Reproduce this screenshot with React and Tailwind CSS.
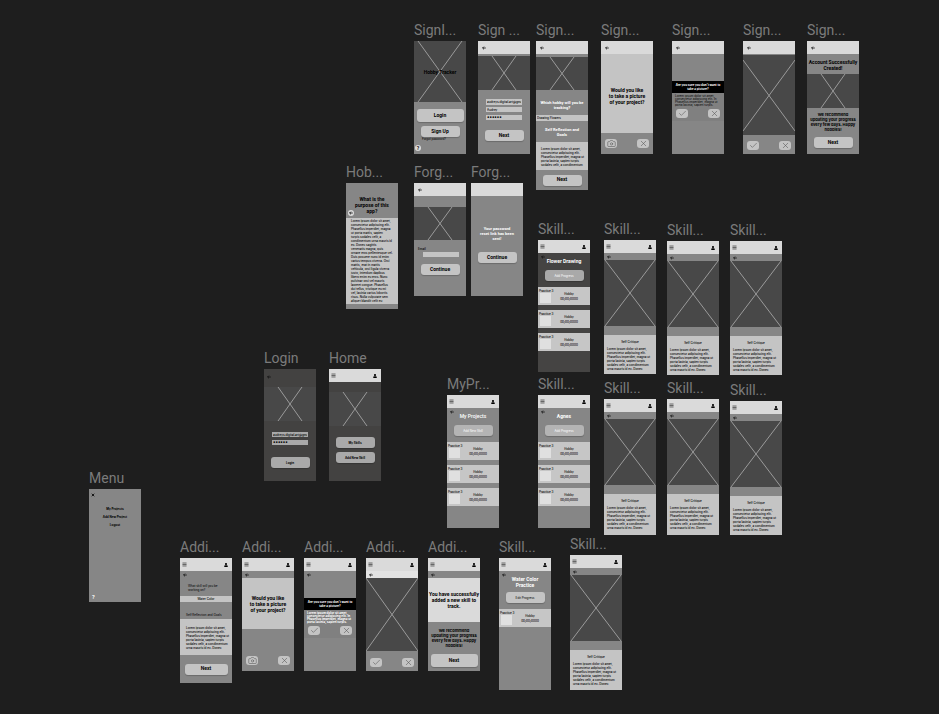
import React from "react";
import { Camera, Check, Menu, X } from "lucide-react";
import { FaUser } from "react-icons/fa";

const LOREM = [
  "Lorem ipsum dolor sit amet,",
  "consectetur adipiscing elit.",
  "Phasellus imperdiet, magna ut",
  "porta lacinia, sapien turpis",
  "sodales velit, a condimentum",
  "urna mauris id ex. Donec",
];

const PURPOSE = [
  "Lorem ipsum dolor sit amet,",
  "consectetur adipiscing elit.",
  "Phasellus imperdiet, magna",
  "ut porta mattis, sapien",
  "turpis sodales velit, a",
  "condimentum urna mauris id",
  "ex. Donec sagittis",
  "venenatis magna, quis",
  "ornare eros pellentesque vel.",
  "Duis posuere nunc id enim",
  "varius tempus viverra. Orci",
  "mattis, erat in mattis",
  "vehicula, orci ligula viverra",
  "justo, interdum dapibus",
  "libero enim eu eros. Nunc",
  "pulvinar orci vel mauris",
  "laoreet congue. Phasellus",
  "dui tellus, tristique eu mi",
  "vel, lacinia varius lobortis",
  "risus. Nulla vulputate sem",
  "aliquet blandit velit eu",
];

const SUCCESS = ["We recommend", "updating your progress", "every few days. Happy", "hobbies!"];

const TINY = "font-[Inter,sans-serif] text-[3px] leading-[4px]";
const NOTE = "font-[Inter,sans-serif] text-[4px] font-bold leading-[5px] text-black";
const HEAD = "text-[5px] font-bold leading-[6px] text-black";

function Lines({ items }) {
  return items.map((t, i) => (
    <span key={i} className="block whitespace-nowrap">
      {t}
    </span>
  ));
}

function Screen({ title, pos, tone = "bg-[#868686]", children }) {
  return (
    <section className={`absolute w-[52px] ${pos}`}>
      <h2 className="h-[21px] whitespace-nowrap text-[14px] leading-[21px] text-[#7b7b7b]">{title}</h2>
      <div className={`flex flex-col overflow-hidden ${tone}`}>{children}</div>
    </section>
  );
}

function Seg({ className = "", children }) {
  return (
    <div className={`flex shrink-0 flex-col items-center justify-center text-center ${className}`}>
      {children}
    </div>
  );
}

function Back() {
  return (
    <a href="#back" aria-label="Back" className="block">
      <svg viewBox="0 0 10 10" className="block size-[4px]" fill="none" stroke="#111" strokeWidth="2">
        <path d="M9.5 5H1.5M5 1.5L1.5 5L5 8.5" />
      </svg>
    </a>
  );
}

function BackBar({ empty }) {
  return (
    <header className="flex h-[13px] shrink-0 items-center bg-[#dadada] px-1">
      {!empty && <Back />}
    </header>
  );
}

function NavBar() {
  return (
    <header className="flex h-[13px] shrink-0 items-center justify-between bg-[#dadada] pl-[2px] pr-1">
      <a href="#menu" aria-label="Menu">
        <Menu size={5} strokeWidth={3} color="#222" />
      </a>
      <a href="#account" aria-label="Account">
        <FaUser size={4} color="#000" />
      </a>
    </header>
  );
}

function BackRow({ className = "h-[7px]" }) {
  return (
    <div className={`flex shrink-0 items-center px-[3px] ${className}`}>
      <Back />
    </div>
  );
}

function Picture({ className, x1 = 14, x2 = 38, y1 = 0, y2 = 100, box = 100, children }) {
  return (
    <div className={`relative w-full shrink-0 bg-[#484848] ${className}`}>
      <svg viewBox={`0 0 52 ${box}`} preserveAspectRatio="none" className="block h-full w-full">
        <path
          d={`M${x1} ${y1}L${x2} ${y2}M${x2} ${y1}L${x1} ${y2}`}
          stroke="#a4a4a4"
          strokeWidth="0.9"
          vectorEffect="non-scaling-stroke"
        />
      </svg>
      {children}
    </div>
  );
}

function Btn({
  children,
  size = "h-[11px] w-[39px]",
  text = "text-[5px] font-bold text-black",
  tone = "bg-[#c4c4c4]",
}) {
  return (
    <button
      type="button"
      className={`flex shrink-0 items-center justify-center whitespace-nowrap rounded-[3px] shadow-[0_1px_1px_rgba(0,0,0,0.2)] ${size} ${text} ${tone}`}
    >
      {children}
    </button>
  );
}

function IconBtn({ icon: Icon, label }) {
  return (
    <button
      type="button"
      aria-label={label}
      className="flex h-[9px] w-[12px] items-center justify-center rounded-[3px] bg-[#c4c4c4] text-[#555]"
    >
      <Icon size={9} strokeWidth={1.5} />
    </button>
  );
}

function Choice({ icon = Check, label = "Yes", className = "" }) {
  return (
    <div className={`flex shrink-0 justify-between px-1 ${className}`}>
      <IconBtn icon={icon} label={label} />
      <IconBtn icon={X} label="No" />
    </div>
  );
}

function Field({
  label,
  value,
  type = "text",
  size = "h-[5px] w-[36px]",
  text = "font-[Inter,sans-serif] text-[3px]",
  tone = "bg-[#c4c4c4]",
  className = "",
}) {
  return (
    <input
      aria-label={label}
      type={type}
      defaultValue={value}
      className={`block shrink-0 px-px font-medium leading-none text-black ${size} ${text} ${tone} ${className}`}
    />
  );
}

function Entry({ n }) {
  return (
    <article className={`flex h-[18px] shrink-0 bg-[#c6c6c6] font-medium text-black ${TINY}`}>
      <div className="w-[20px] pl-px pt-[2px]">
        <p className="whitespace-nowrap">Practice {n}</p>
        <div className="ml-px h-[10px] w-[11px] bg-[#e0e0e0]" />
      </div>
      <div className="flex w-[22px] flex-col items-center justify-center gap-px">
        <p>Hobby</p>
        <p>00/00/0000</p>
      </div>
    </article>
  );
}

function ProjectList({
  title,
  pos,
  tone,
  weight = "font-bold",
  head = "h-[12px]",
  action,
  btnTone,
  btnText = "text-white",
  entries,
  end,
  lines,
}) {
  return (
    <Screen title={title} pos={pos} tone={tone}>
      <NavBar />
      <BackRow className="h-[5px] pt-[2px]" />
      <Seg className={`justify-start text-[5px] leading-[6px] text-white ${weight} ${head}`}>
        <h3>
          <Lines items={lines} />
        </h3>
      </Seg>
      <Seg className="mb-[6px]">
        <Btn text={`${TINY} ${btnText}`} tone={btnTone}>
          {action}
        </Btn>
      </Seg>
      <div className={`flex flex-col gap-[5px] ${end}`}>
        {entries.map((n, i) => (
          <Entry key={i} n={n} />
        ))}
      </div>
    </Screen>
  );
}

function Critique({ pos, tail = "h-[39px]" }) {
  return (
    <Screen title="Skill..." pos={pos}>
      <NavBar />
      <BackRow />
      <Picture className="h-[66px]" x1={1} x2={51} />
      <div className="h-[9px] shrink-0" />
      <div className={`shrink-0 bg-[#c4c4c4] px-[3px] pt-[5px] font-medium text-black ${TINY} ${tail}`}>
        <h3 className="mb-[3px] text-center">Self Critique</h3>
        <p>
          <Lines items={LOREM} />
        </p>
      </div>
    </Screen>
  );
}

function Question() {
  return (
    <h3 className={HEAD}>
      <Lines items={["Would you like", "to take a picture", "of your project?"]} />
    </h3>
  );
}

function Confirm({ text }) {
  return (
    <>
      <Seg className={`h-[12px] bg-black font-bold text-white ${TINY}`}>
        <h3>
          <Lines items={["Are you sure you don't want to", "take a picture?"]} />
        </h3>
      </Seg>
      <div className="h-[28px] bg-[#808080]">
        <p className={`h-[16px] px-[3px] pt-[2px] font-[Inter,sans-serif] text-[3px] leading-[3px] ${text}`}>
          <Lines
            items={[
              "Lorem ipsum dolor sit amet,",
              "consectetur adipiscing elit. In",
              "Phasellus imperdiet, magna ut",
              "porta lacinia, sapien turpis.",
            ]}
          />
        </p>
        <Choice />
      </div>
    </>
  );
}

export default function App() {
  return (
    <main className="relative min-h-screen w-full overflow-hidden bg-[#1e1e1e] font-[Roboto,sans-serif]">
      <Screen title="SignI..." pos="left-[414px] top-[20px]">
        <Picture className="h-[61px]" x1={4} x2={48}>
          <h3 className={`absolute inset-0 flex items-center justify-center whitespace-nowrap ${HEAD}`}>
            Hobby Tracker
          </h3>
        </Picture>
        <Seg className="h-[52px] justify-start pt-[7px]">
          <Btn size="h-[13px] w-[47px]">Login</Btn>
          <div className="h-[4px]" />
          <Btn>Sign Up</Btn>
          <a href="#forgot" className="self-start pl-2 text-[3px] leading-[5px] text-black">
            Forgot password?
          </a>
          <a
            href="#help"
            className="mt-[3px] ml-px flex size-[6px] items-center justify-center self-start rounded-full bg-[#dadada] text-[5px] font-bold leading-none text-black"
          >
            ?
          </a>
        </Seg>
      </Screen>

      <Screen title="Sign ..." pos="left-[478px] top-[20px]">
        <BackBar />
        <Picture className="mt-[2px] h-[34px]" />
        <Seg className="h-[64px] justify-start pt-[9px]">
          <Field label="Email" value="audreys.digital.art@gmail" size="h-[6px] w-[36px]" className="mb-[2px]" />
          <Field label="Name" value="Audrey" className="mb-[3px]" />
          <Field label="Password" value="••••••" text="text-[7px]" className="mb-[10px]" />
          <Btn>Next</Btn>
        </Seg>
      </Screen>

      <Screen title="Sign..." pos="left-[536px] top-[20px]">
        <BackBar />
        <Picture className="mt-[3px] h-[33px]" />
        <Seg className="h-[25px] pt-[5px] text-[4px] font-bold leading-[5px] text-white">
          <h3>
            <Lines items={["Which hobby will you be", "tracking?"]} />
          </h3>
        </Seg>
        <Field label="Hobby" value="Drawing Flowers" size="h-[6px] w-full" />
        <Seg className="h-[21px] text-[4px] font-bold leading-[5px] text-white">
          <h3>
            <Lines items={["Self Reflection and", "Goals"]} />
          </h3>
        </Seg>
        <p className={`h-[28px] bg-[#c4c4c4] px-[5px] pt-[5px] font-medium text-black ${TINY}`}>
          <Lines items={LOREM.slice(0, 5)} />
        </p>
        <Seg className="h-[20px]">
          <Btn>Next</Btn>
        </Seg>
      </Screen>

      <Screen title="Sign..." pos="left-[601px] top-[20px]">
        <BackBar />
        <Seg className="h-[79px] bg-[#c4c4c4] pt-[4px]">
          <Question />
        </Seg>
        <Choice icon={Camera} label="Take picture" className="h-[21px] items-center" />
      </Screen>

      <Screen title="Sign..." pos="left-[672px] top-[20px]">
        <BackBar />
        <div className="h-[27px]" />
        <Confirm text="text-black" />
        <div className="h-[33px]" />
      </Screen>

      <Screen title="Sign..." pos="left-[743px] top-[20px]">
        <BackBar />
        <Picture className="mt-px h-[80px]" x1={0} x2={52} y1={5} y2={76} box={80} />
        <Choice className="h-[19px] items-center pt-[2px]" />
      </Screen>

      <Screen title="Sign..." pos="left-[807px] top-[20px]">
        <BackBar />
        <Seg className={`h-[20px] pt-[2px] ${HEAD}`}>
          <h3>
            <Lines items={["Account Successfully", "Created!"]} />
          </h3>
        </Seg>
        <Picture className="h-[34px]" />
        <Seg className={`h-[28px] ${NOTE}`}>
          <p>
            <Lines items={SUCCESS} />
          </p>
        </Seg>
        <Seg className="h-[18px] justify-start pt-px">
          <Btn>Next</Btn>
        </Seg>
      </Screen>

      <Screen title="Hob..." pos="left-[346px] top-[162px]">
        <div className="flex h-[35px] flex-col items-center pt-[13px] text-center">
          <h3 className={HEAD}>
            <Lines items={["What is the", "purpose of this", "app?"]} />
          </h3>
          <div className="-mt-[4px] ml-[2px] flex size-[6px] items-center justify-center self-start rounded-full bg-[#dadada]">
            <Back />
          </div>
        </div>
        <p className={`h-[86px] bg-[#c4c4c4] pl-[5px] pt-px font-medium text-black ${TINY}`}>
          <Lines items={PURPOSE} />
        </p>
        <div className="h-[5px]" />
      </Screen>

      <Screen title="Forg..." pos="left-[414px] top-[162px]">
        <BackBar />
        <Picture className="mt-[11px] h-[33px]" />
        <div className="flex h-[56px] flex-col items-center pt-[7px]">
          <label htmlFor="email" className={`self-start pl-1 font-medium text-black ${TINY}`}>
            Email
          </label>
          <input id="email" type="email" className="mt-px mb-[7px] ml-[2px] h-[5px] w-[36px] bg-[#c4c4c4] text-[3px]" />
          <Btn>Continue</Btn>
        </div>
      </Screen>

      <Screen title="Forg..." pos="left-[471px] top-[162px]">
        <BackBar empty />
        <Seg className="h-[100px] justify-start pt-[30px] text-[4px] font-bold leading-[5px] text-white">
          <p>
            <Lines items={["Your password", "reset link has been", "sent!"]} />
          </p>
          <div className="h-[11px]" />
          <Btn>Continue</Btn>
        </Seg>
      </Screen>

      <ProjectList
        title="Skill..."
        pos="left-[538px] top-[219px]"
        tone="bg-[#454443]"
        lines={["Flower Drawing"]}
        action="Add Progress"
        btnTone="bg-[#a9a9a9]"
        entries={[3, 3, 3]}
        end="pb-[21px]"
      />
      <Critique pos="left-[604px] top-[219px]" />
      <Critique pos="left-[667px] top-[220px]" />
      <Critique pos="left-[730px] top-[220px]" />

      <Screen title="Login" pos="left-[264px] top-[348px]" tone="bg-[#434241]">
        <div className="h-[18px] px-[3px] pt-[6px]">
          <Back />
        </div>
        <Picture className="h-[34px]" />
        <Seg className="h-[60px] justify-start pt-[11px]">
          <Field label="Email" value="audreys.digital.art@gmail" tone="bg-[#a9a9a9]" className="mb-[3px]" />
          <Field label="Password" value="••••••" text="text-[7px]" tone="bg-[#a9a9a9]" className="mb-[12px]" />
          <Btn tone="bg-[#a9a9a9]" text={`${TINY} font-bold text-black`}>
            Login
          </Btn>
        </Seg>
      </Screen>

      <Screen title="Home" pos="left-[329px] top-[348px]" tone="bg-[#434241]">
        <NavBar />
        <Picture className="mt-[10px] h-[34px]" />
        <Seg className="h-[55px] justify-start gap-[4px] pt-[11px]">
          <Btn tone="bg-[#a9a9a9]" text={`${TINY} font-bold text-black`}>
            My Skills
          </Btn>
          <Btn tone="bg-[#a9a9a9]" text={`${TINY} font-bold text-black`}>
            Add New Skill
          </Btn>
        </Seg>
      </Screen>

      <ProjectList
        title="MyPr..."
        pos="left-[447px] top-[374px]"
        lines={["My Projects"]}
        weight="font-medium"
        action="Add New Skill"
        btnTone="bg-[#b4b4b4]"
        entries={[3, 3, 3]}
        end="pb-[22px]"
      />
      <ProjectList
        title="Skill..."
        pos="left-[538px] top-[374px]"
        lines={["Agnes"]}
        action="Add Progress"
        btnTone="bg-[#b4b4b4]"
        entries={[3, 3, 3]}
        end="pb-[22px]"
      />
      <Critique pos="left-[604px] top-[378px]" tail="h-[41px]" />
      <Critique pos="left-[667px] top-[378px]" tail="h-[41px]" />
      <Critique pos="left-[730px] top-[380px]" />

      <Screen title="Menu" pos="left-[89px] top-[468px]">
        <nav className={`flex h-[113px] flex-col items-center font-bold text-black ${TINY}`}>
          <button type="button" aria-label="Close" className="ml-[2px] mt-[4px] self-start">
            <X size={4} strokeWidth={5} />
          </button>
          <ul className="mt-[10px] flex grow flex-col gap-1 text-center">
            <li>
              <a href="#projects">My Projects</a>
            </li>
            <li>
              <a href="#new">Add New Project</a>
            </li>
            <li>
              <a href="#logout">Logout</a>
            </li>
          </ul>
          <a href="#help" className="mb-[2px] ml-[3px] self-start text-[5px] leading-[5px] text-white">
            ?
          </a>
        </nav>
      </Screen>

      <Screen title="Addi..." pos="left-[180px] top-[537px]">
        <NavBar />
        <BackRow />
        <h3 className={`h-[18px] pl-2 pt-[6px] text-black ${TINY}`}>
          <Lines items={["What skill will you be", "working on?"]} />
        </h3>
        <Field label="Skill" value="Water Color" size="h-[6px] w-full" className="text-center" />
        <h3 className={`h-[17px] whitespace-nowrap pl-[6px] pt-[11px] text-black ${TINY}`}>
          Self Reflection and Goals
        </h3>
        <p className={`h-[36px] bg-[#c4c4c4] pl-[6px] pt-[7px] font-medium text-black ${TINY}`}>
          <Lines items={LOREM} />
        </p>
        <Seg className="h-[28px]">
          <Btn size="h-[11px] w-[43px]">Next</Btn>
        </Seg>
      </Screen>

      <Screen title="Addi..." pos="left-[242px] top-[537px]">
        <NavBar />
        <BackRow />
        <Seg className="h-[51px] bg-[#c4c4c4]">
          <Question />
        </Seg>
        <Choice icon={Camera} label="Take picture" className="h-[42px] items-end pb-[6px]" />
      </Screen>

      <Screen title="Addi..." pos="left-[304px] top-[537px]">
        <NavBar />
        <BackRow />
        <div className="h-[20px]" />
        <Confirm text="font-bold text-white" />
        <div className="h-[33px]" />
      </Screen>

      <Screen title="Addi..." pos="left-[366px] top-[537px]">
        <NavBar />
        <BackRow className="h-[7px] bg-[#e2e2e2]" />
        <Picture className="h-[73px]" x1={0} x2={52} />
        <Choice className="h-[20px] items-center pt-[3px]" />
      </Screen>

      <Screen title="Addi..." pos="left-[428px] top-[537px]">
        <NavBar />
        <BackRow />
        <Seg className={`h-[44px] bg-[#dadada] ${HEAD}`}>
          <h3>
            <Lines items={["You have successfully", "added a new skill to", "track."]} />
          </h3>
        </Seg>
        <Seg className={`h-[32px] ${NOTE}`}>
          <p>
            <Lines items={SUCCESS} />
          </p>
        </Seg>
        <Seg className="h-[17px] justify-start">
          <Btn size="h-[13px] w-[47px]">Next</Btn>
        </Seg>
      </Screen>

      <ProjectList
        title="Skill..."
        pos="left-[499px] top-[537px]"
        lines={["Water Color", "Practice"]}
        head="h-[16px]"
        action="Edit Progress"
        btnTone="bg-[#c4c4c4]"
        btnText="text-black"
        entries={[3]}
        end="pb-[63px]"
      />
      <Critique pos="left-[570px] top-[534px]" tail="h-[40px]" />
    </main>
  );
}
